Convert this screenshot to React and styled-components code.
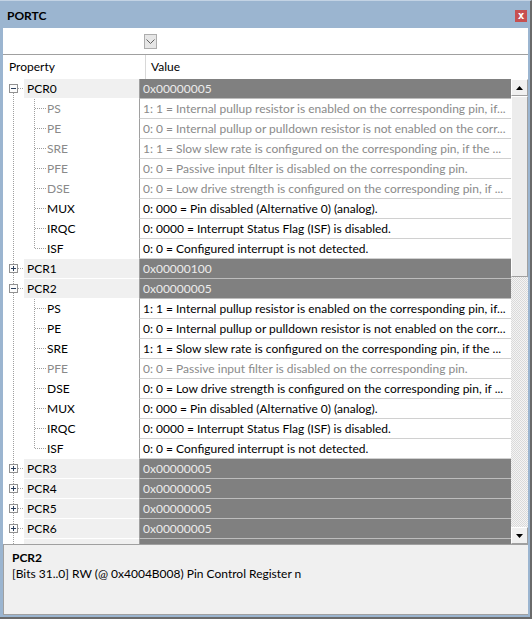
import React from 'react'
import styled, { createGlobalStyle } from 'styled-components'

const GlobalStyle = createGlobalStyle`
  body {
    margin: 0;
    font-family: Lato, 'Noto Sans', sans-serif;
    font-size: 12px;
  }
`

const FIELDS = [
  ['PS', '1: 1 = Internal pullup resistor is enabled on the corresponding pin, if...'],
  ['PE', '0: 0 = Internal pullup or pulldown resistor is not enabled on the corr...'],
  ['SRE', '1: 1 = Slow slew rate is configured on the corresponding pin, if the ...'],
  ['PFE', '0: 0 = Passive input filter is disabled on the corresponding pin.'],
  ['DSE', '0: 0 = Low drive strength is configured on the corresponding pin, if ...'],
  ['MUX', '0: 000 = Pin disabled (Alternative 0) (analog).'],
  ['IRQC', '0: 0000 = Interrupt Status Flag (ISF) is disabled.'],
  ['ISF', '0: 0 = Configured interrupt is not detected.'],
]

const REGISTERS = [
  { name: 'PCR0', value: '0x00000005', open: true, dim: ['PS', 'PE', 'SRE', 'PFE', 'DSE'] },
  { name: 'PCR1', value: '0x00000100' },
  { name: 'PCR2', value: '0x00000005', open: true, dim: ['PFE'] },
  { name: 'PCR3', value: '0x00000005' },
  { name: 'PCR4', value: '0x00000005' },
  { name: 'PCR5', value: '0x00000005' },
  { name: 'PCR6', value: '0x00000005' },
  { name: 'PCR7', value: '0x00000001' },
]

const Window = styled.div`
  width: 532px;
  height: 619px;
  box-sizing: border-box;
  display: flex;
  flex-direction: column;
  background: #9bb5d0;
  border-top: 1px solid #c3d3e4;
  border-right: 2px solid #6a6a6a;
  border-bottom: 2px solid #6a6a6a;
`

const TitleBar = styled.div`
  height: 27px;
  flex: none;
  display: flex;
  align-items: center;
  justify-content: space-between;
  padding: 2px 3px 0 7px;
  box-sizing: border-box;
  font-weight: bold;
  color: #000;
`

const CloseButton = styled.div`
  width: 12px;
  height: 12px;
  background: #c75050;
  color: #fff;
  font-family: 'DejaVu Sans Mono', monospace;
  font-size: 11px;
  font-weight: bold;
  line-height: 11px;
  text-align: center;
`

const Client = styled.div`
  flex: 1;
  display: flex;
  flex-direction: column;
  margin: 0 2px 2px 3px;
  background: #fff;
  min-height: 0;
`

const Toolbar = styled.div`
  height: 26px;
  flex: none;
  display: flex;
  align-items: center;
  padding-left: 141px;
`

const DropButton = styled.div`
  width: 13px;
  height: 15px;
  box-sizing: border-box;
  border: 1px solid #adadad;
  background: #e6e6e6;
  display: flex;
  align-items: center;
  justify-content: center;
`

const HeaderRow = styled.div`
  height: 25px;
  flex: none;
  box-sizing: border-box;
  border-top: 1px solid #a0a0a0;
  display: flex;
`

const HeaderCell = styled.div`
  width: ${({ width }) => (width ? `${width}px` : 'auto')};
  flex: ${({ width }) => (width ? 'none' : 1)};
  padding-left: ${({ pad }) => pad}px;
  border-left: ${({ divider }) => (divider ? '1px solid #d8d8d8' : 'none')};
  line-height: 24px;
  color: #000;
`

const Body = styled.div`
  height: 465px;
  flex: none;
  display: flex;
`

const List = styled.div`
  flex: 1;
  overflow: hidden;
`

const Row = styled.div`
  height: 20px;
  display: flex;
`

const PropCell = styled.div`
  width: 136px;
  flex: none;
  display: flex;
`

const Label = styled.div`
  flex: 1;
  height: 20px;
  box-sizing: border-box;
  padding-left: ${({ group }) => (group ? 3 : 1)}px;
  background: ${({ group }) => (group ? '#f0f0f0' : '#fff')};
  border-bottom: 1px solid #fff;
  line-height: 19px;
  color: ${({ dim }) => (dim ? '#8a8a8a' : '#000')};
  white-space: nowrap;
`

const ValueCell = styled.div`
  flex: 1;
  height: 20px;
  box-sizing: border-box;
  border-left: 1px solid #a0a0a0;
  border-bottom: 1px solid ${({ group }) => (group ? '#bdbdbd' : '#d0d0d0')};
  background: ${({ group }) => (group ? '#808080' : '#fff')};
  color: ${({ group, dim }) => (group ? '#ececec' : dim ? '#8a8a8a' : '#000')};
  padding-left: 3px;
  line-height: 19px;
  white-space: nowrap;
  overflow: hidden;
`

const Scrollbar = styled.div`
  width: 17px;
  flex: none;
  display: flex;
  flex-direction: column;
  background: repeating-conic-gradient(#f4f4f4 0 25%, #dadada 0 50%) 0 0 / 2px 2px;
`

const ScrollButton = styled.div`
  height: 17px;
  flex: none;
  box-sizing: border-box;
  background: #f0f0f0;
  border-top: 1px solid #fff;
  border-left: 1px solid #fff;
  border-right: 1px solid #a0a0a0;
  border-bottom: 1px solid #a0a0a0;
  display: flex;
  align-items: center;
  justify-content: center;
`

const Thumb = styled.div`
  height: 181px;
  flex: none;
  box-sizing: border-box;
  background: #ececec;
  border-top: 1px solid #fff;
  border-left: 1px solid #fff;
  border-right: 1px solid #a0a0a0;
  border-bottom: 1px solid #a0a0a0;
`

const Track = styled.div`
  flex: 1;
`

const Description = styled.div`
  flex: 1;
  box-sizing: border-box;
  background: #f0f0f0;
  border: 1px solid #a0a0a0;
  border-right: none;
  padding: 5px 8px;
  line-height: 16px;
  color: #000;
`

const DescTitle = styled.div`
  font-weight: bold;
`

const dash = { stroke: '#a0a0a0', strokeWidth: 1, strokeDasharray: '1 1', shapeRendering: 'crispEdges' }

const Expander = ({ open }) => (
  <g shapeRendering="crispEdges">
    <rect x="6.5" y="5.5" width="8" height="8" fill="#fcfcfc" stroke="#919191" />
    <line x1="8" y1="9.5" x2="13" y2="9.5" stroke="#2b3f5c" />
    {!open && <line x1="10.5" y1="7" x2="10.5" y2="12" stroke="#2b3f5c" />}
  </g>
)

const GroupGutter = ({ open, first }) => (
  <svg width="21" height="20">
    <line x1="10.5" y1={first ? 10 : 0} x2="10.5" y2="20" style={dash} />
    <line x1="15" y1="9.5" x2="21" y2="9.5" style={dash} />
    <Expander open={open} />
  </svg>
)

const FieldGutter = ({ last }) => (
  <svg width="43" height="20">
    <line x1="10.5" y1="0" x2="10.5" y2="20" style={dash} />
    <line x1="31.5" y1="0" x2="31.5" y2={last ? 10 : 20} style={dash} />
    <line x1="32" y1="9.5" x2="43" y2="9.5" style={dash} />
  </svg>
)

const Register = ({ reg, first }) => (
  <>
    <Row>
      <PropCell>
        <GroupGutter open={reg.open} first={first} />
        <Label group>{reg.name}</Label>
      </PropCell>
      <ValueCell group>{reg.value}</ValueCell>
    </Row>
    {reg.open &&
      FIELDS.map(([name, text], i) => {
        const dim = reg.dim.includes(name)
        return (
          <Row key={name}>
            <PropCell>
              <FieldGutter last={i === FIELDS.length - 1} />
              <Label dim={dim}>{name}</Label>
            </PropCell>
            <ValueCell dim={dim}>{text}</ValueCell>
          </Row>
        )
      })}
  </>
)

const App = () => (
  <>
    <GlobalStyle />
    <Window>
      <TitleBar>
        <span>PORTC</span>
        <CloseButton>x</CloseButton>
      </TitleBar>
      <Client>
        <Toolbar>
          <DropButton>
            <svg width="9" height="5">
              <polyline points="0.5,0.5 4.5,4.5 8.5,0.5" fill="none" stroke="#606060" />
            </svg>
          </DropButton>
        </Toolbar>
        <HeaderRow>
          <HeaderCell width={136} pad={6}>Property</HeaderCell>
          <HeaderCell divider pad={5}>Value</HeaderCell>
        </HeaderRow>
        <Body>
          <List>
            {REGISTERS.map((reg, i) => (
              <Register key={reg.name} reg={reg} first={i === 0} />
            ))}
          </List>
          <Scrollbar>
            <ScrollButton>
              <svg width="7" height="4">
                <polygon points="0,4 3.5,0 7,4" fill="#000" />
              </svg>
            </ScrollButton>
            <Thumb />
            <Track />
            <ScrollButton>
              <svg width="7" height="4">
                <polygon points="0,0 3.5,4 7,0" fill="#000" />
              </svg>
            </ScrollButton>
          </Scrollbar>
        </Body>
        <Description>
          <DescTitle>PCR2</DescTitle>
          <div>[Bits 31..0] RW (@ 0x4004B008) Pin Control Register n</div>
        </Description>
      </Client>
    </Window>
  </>
)

export default App
